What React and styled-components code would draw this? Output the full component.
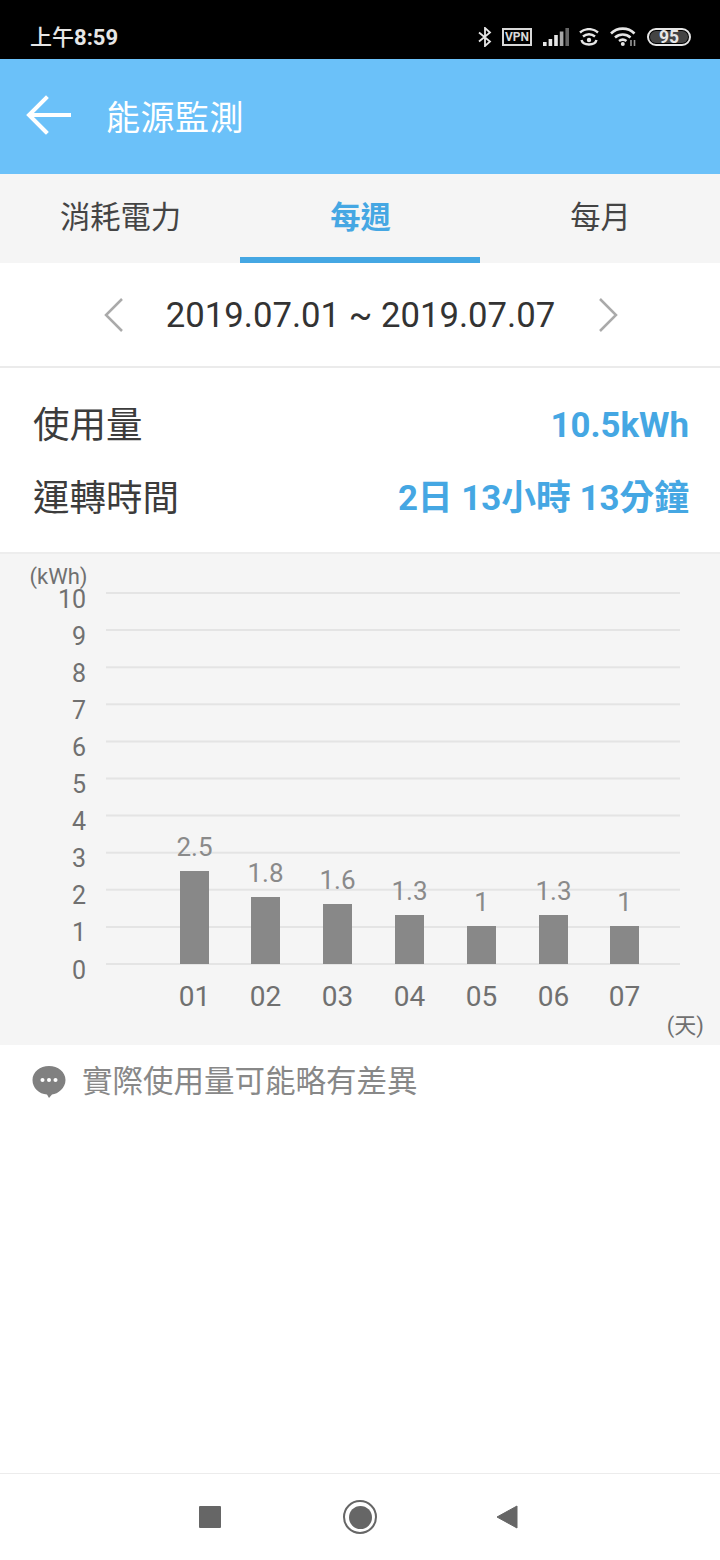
import React from 'react';
import styled, { createGlobalStyle } from 'styled-components';

const CJK = '"Roboto", "Noto Sans CJK TC", sans-serif';

const GlobalStyle = createGlobalStyle`
  html, body { margin: 0; padding: 0; background: #fff; }
  body { font-family: ${CJK}; }
`;

const tabs = [
  { label: '消耗電力' },
  { label: '每週', active: true },
  { label: '每月' },
];

const bars = [
  { day: '01', value: '2.5', x: 180, top: 871 },
  { day: '02', value: '1.8', x: 251, top: 897 },
  { day: '03', value: '1.6', x: 323, top: 904 },
  { day: '04', value: '1.3', x: 395, top: 915 },
  { day: '05', value: '1', x: 467, top: 926 },
  { day: '06', value: '1.3', x: 539, top: 915 },
  { day: '07', value: '1', x: 610, top: 926 },
];

const ticks = [10, 9, 8, 7, 6, 5, 4, 3, 2, 1, 0];

const App = () => (
  <Page>
    <GlobalStyle />
    <StatusBar>
      <Clock>上午<ClockDigits>8:59</ClockDigits></Clock>
      <StatusIcons>
        <svg width="14" height="20" viewBox="0 0 14 20" fill="none" stroke="#e6e6e6" strokeWidth="1.800">
          <path d="M1 5.500l11 9-5 4.500V1l5 4.500-11 9" />
        </svg>
        <VpnBadge>VPN</VpnBadge>
        <svg width="26" height="18" viewBox="0 0 26 18">
          <rect x="0" y="14" width="3.600" height="4" fill="#e6e6e6" />
          <rect x="5.600" y="11" width="3.600" height="7" fill="#e6e6e6" />
          <rect x="11.200" y="7" width="3.600" height="11" fill="#e6e6e6" />
          <rect x="16.800" y="3.500" width="3.600" height="14.500" fill="#a8a8a8" />
          <rect x="22.400" y="0" width="3.600" height="18" fill="#666" />
        </svg>
        <svg width="20" height="18" viewBox="0 0 20 18" fill="none" stroke="#e6e6e6" strokeWidth="2.400">
          <path d="M1 4.500c5-4.500 13-4.500 18 0" />
          <path d="M4 8.500c3.500-3 8.500-3 12 0" />
          <path d="M2.500 12c1.500 6 13.500 6 15 0" />
          <circle cx="10" cy="12" r="2.200" fill="#e6e6e6" stroke="none" />
        </svg>
        <svg width="27" height="19" viewBox="0 0 27 19" fill="none" stroke="#e6e6e6" strokeWidth="2.600">
          <path d="M1 6.500c6.500-6.500 17-6.500 23.500 0" />
          <path d="M5 10.500c4.500-4 11-4 15.500 0" />
          <path d="M9 14c2.500-1.800 5-1.800 7.500 0" />
          <circle cx="12.800" cy="17" r="2" fill="#e6e6e6" stroke="none" />
          <path d="M21 13v6M24.500 13v6" strokeWidth="1.600" stroke="#999" />
        </svg>
        <Battery><BatteryLevel>95</BatteryLevel></Battery>
      </StatusIcons>
    </StatusBar>

    <Header>
      <svg width="46" height="40" viewBox="0 0 46 40" fill="none" stroke="#fff" strokeWidth="4" strokeLinecap="square">
        <path d="M20 3L3 20l17 17M4 20h39" />
      </svg>
      <Title>能源監測</Title>
    </Header>

    <Tabs>
      {tabs.map(tab => (
        <Tab key={tab.label} $active={tab.active}>{tab.label}</Tab>
      ))}
    </Tabs>

    <DateRow>
      <svg width="22" height="36" viewBox="0 0 22 36" fill="none" stroke="#aaa" strokeWidth="2.500">
        <path d="M19 2L3 18l16 16" />
      </svg>
      <DateText>2019.07.01 ~ 2019.07.07</DateText>
      <svg width="22" height="36" viewBox="0 0 22 36" fill="none" stroke="#aaa" strokeWidth="2.500">
        <path d="M3 2l16 16L3 34" />
      </svg>
    </DateRow>

    <Summary>
      <SummaryRow>
        <SummaryLabel>使用量</SummaryLabel>
        <SummaryValue>10.5kWh</SummaryValue>
      </SummaryRow>
      <SummaryRow>
        <SummaryLabel>運轉時間</SummaryLabel>
        <SummaryValue>2日 13小時 13分鐘</SummaryValue>
      </SummaryRow>
    </Summary>

    <ChartPanel>
      <svg width="720" height="491" viewBox="0 554 720 491">
        <AxisText x="87.500" y="584" textAnchor="end" fontSize="22">(kWh)</AxisText>
        {ticks.map((t, i) => {
          const y = 593 + i * 37.1;
          return (
            <g key={t}>
              <line x1="106" x2="680" y1={y} y2={y} stroke="#e4e4e4" strokeWidth="2" />
              <AxisText x="86" y={y + 14.5} textAnchor="end" fontSize="25">{t}</AxisText>
            </g>
          );
        })}
        {bars.map(b => (
          <g key={b.day}>
            <rect x={b.x} y={b.top} width="29" height={964 - b.top} fill="#888" />
            <AxisText x={b.x + 14.5} y={b.top - 15} textAnchor="middle" fontSize="26" fill="#8a8a8a">{b.value}</AxisText>
            <AxisText x={b.x + 14.5} y="1006" textAnchor="middle" fontSize="28">{b.day}</AxisText>
          </g>
        ))}
        <AxisText x="704" y="1033" textAnchor="end" fontSize="22">(天)</AxisText>
      </svg>
    </ChartPanel>

    <Note>
      <svg width="34" height="34" viewBox="0 0 34 34">
        <path d="M17 1c9 0 16.500 6 16.500 14S26 29 20 29.500L17 33l-2-3.500C7 29 .500 23 .500 15S8 1 17 1z" fill="#808080" />
        <circle cx="10.500" cy="15" r="2" fill="#fff" />
        <circle cx="17" cy="15" r="2" fill="#fff" />
        <circle cx="23.500" cy="15" r="2" fill="#fff" />
      </svg>
      <NoteText>實際使用量可能略有差異</NoteText>
    </Note>

    <NavBar>
      <NavSquare />
      <NavHome><NavHomeDot /></NavHome>
      <svg width="22" height="26" viewBox="0 0 22 26">
        <path d="M21 2v22L1 13z" fill="#666" stroke="#666" strokeLinejoin="round" />
      </svg>
    </NavBar>
  </Page>
);

const Page = styled.div`
  width: 720px;
  height: 1560px;
  display: flex;
  flex-direction: column;
  overflow: hidden;
  background: #fff;
`;

const StatusBar = styled.div`
  height: 59px;
  flex: none;
  background: #000;
  display: flex;
  align-items: center;
  justify-content: space-between;
  padding: 14px 29px 0 30px;
  box-sizing: border-box;
`;

const Clock = styled.span`
  color: #e6e6e6;
  font-size: 22px;
  font-weight: 500;
  padding-bottom: 4px;
`;

const ClockDigits = styled.span`
  font-weight: 700;
`;

const StatusIcons = styled.div`
  display: flex;
  align-items: center;
  gap: 10.5px;
`;

const VpnBadge = styled.span`
  width: 30px;
  height: 18px;
  box-sizing: border-box;
  border: 2px solid #d8d8d8;
  color: #d8d8d8;
  font-size: 12px;
  font-weight: 700;
  line-height: 14px;
  text-align: center;
`;

const Battery = styled.span`
  width: 44px;
  height: 18px;
  box-sizing: border-box;
  border: 2px solid #e6e6e6;
  border-radius: 9px;
  padding: 1px;
  display: flex;
`;

const BatteryLevel = styled.span`
  flex: 1;
  background: #444;
  border-radius: 6px;
  color: #e6e6e6;
  font-size: 17.5px;
  font-weight: 700;
  line-height: 12px;
  text-align: center;
`;

const Header = styled.div`
  height: 115px;
  flex: none;
  background: #6bc1f9;
  display: flex;
  align-items: center;
  padding: 0 0 3px 26px;
  box-sizing: border-box;
`;

const Title = styled.h1`
  margin: 0 0 0 34px;
  color: #fff;
  font-size: 34px;
  font-weight: 400;
  letter-spacing: 0.5px;
`;

const Tabs = styled.div`
  height: 89px;
  flex: none;
  background: #f5f5f5;
  display: grid;
  grid-template-columns: repeat(3, 1fr);
`;

const Tab = styled.div`
  display: flex;
  align-items: center;
  justify-content: center;
  box-sizing: border-box;
  padding: 0 0 1px 1px;
  font-size: 30.3px;
  font-weight: ${p => (p.$active ? 700 : 400)};
  color: ${p => (p.$active ? '#45a7e3' : '#444')};
  border-bottom: 6px solid ${p => (p.$active ? '#45a7e3' : 'transparent')};
`;

const DateRow = styled.div`
  height: 105px;
  flex: none;
  box-sizing: border-box;
  border-bottom: 2px solid #ebebeb;
  display: flex;
  align-items: center;
  justify-content: center;
  gap: 41px;
  padding: 1px 0 0 1px;
`;

const DateText = styled.span`
  font-size: 34.7px;
  color: #333;
  width: 390px;
  text-align: center;
  white-space: nowrap;
`;

const Summary = styled.div`
  height: 186px;
  flex: none;
  box-sizing: border-box;
  padding: 20px 31px 0 33px;
  border-bottom: 2px solid #ededed;
  display: flex;
  flex-direction: column;
`;

const SummaryRow = styled.div`
  height: 73px;
  display: flex;
  align-items: center;
  justify-content: space-between;
`;

const SummaryLabel = styled.span`
  font-size: 36.5px;
  line-height: 40px;
  color: #3c3c3c;
  padding-top: 2px;
`;

const SummaryValue = styled.span`
  font-size: 34.8px;
  line-height: 40px;
  font-weight: 700;
  color: #45a7e3;
`;

const ChartPanel = styled.div`
  height: 491px;
  flex: none;
  background: #f5f5f5;
  svg { display: block; }
`;

const AxisText = styled.text.attrs(p => ({ fill: p.fill || '#707070' }))`
  font-family: ${CJK};
`;

const Note = styled.div`
  flex: 1;
  display: flex;
  align-items: flex-start;
  gap: 16px;
  padding: 20px 0 0 32px;
`;

const NoteText = styled.span`
  font-size: 30.5px;
  line-height: 34px;
  color: #888;
`;

const NavBar = styled.div`
  height: 87px;
  flex: none;
  box-sizing: border-box;
  border-top: 1px solid #ececec;
  display: flex;
  align-items: center;
  padding: 0 0 0 199px;
  gap: 120px;
  svg { margin-left: -1px; }
`;

const NavSquare = styled.div`
  width: 22px;
  height: 22px;
  background: #666;
  border-radius: 1px;
`;

const NavHome = styled.div`
  width: 34px;
  height: 34px;
  margin-left: 2px;
  box-sizing: border-box;
  border-radius: 50%;
  border: 2.5px solid #666;
  display: flex;
  align-items: center;
  justify-content: center;
`;

const NavHomeDot = styled.div`
  width: 23px;
  height: 23px;
  border-radius: 50%;
  background: #666;
`;

export default App;
